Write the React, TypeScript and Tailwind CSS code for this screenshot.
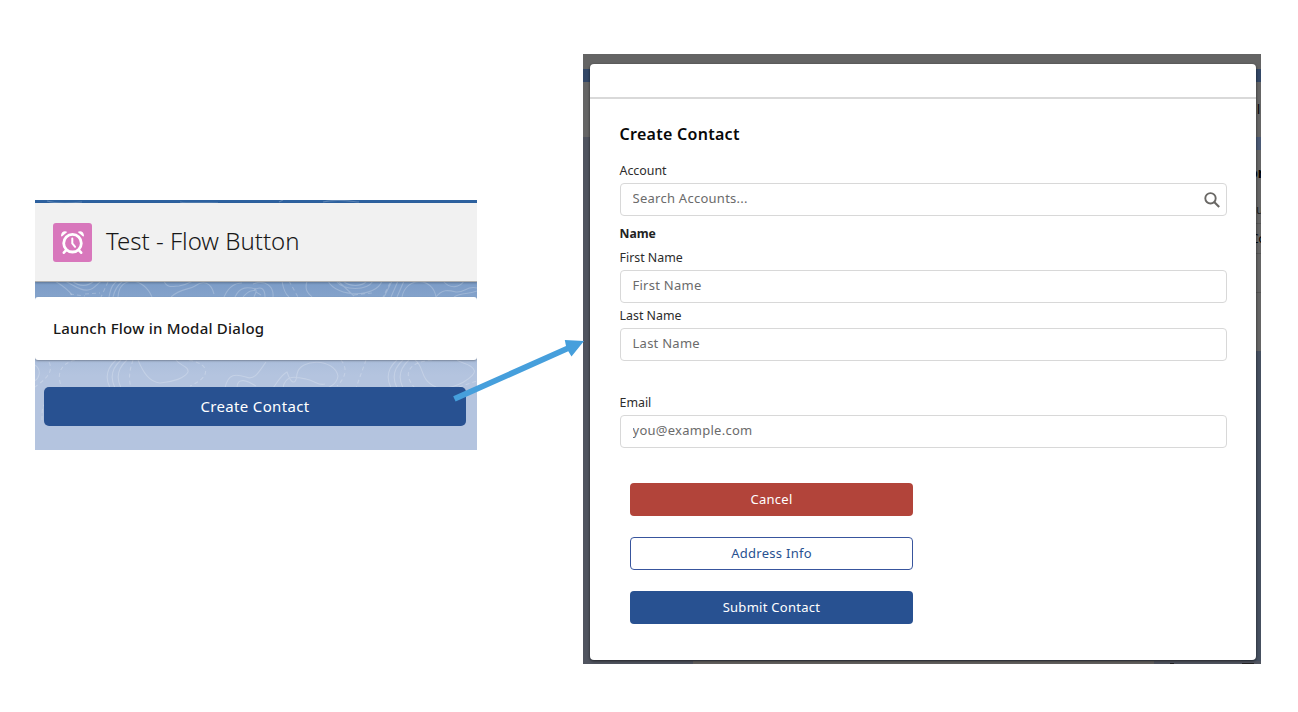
import type { ReactNode } from "react";

function Contours({ className }: { className: string }) {
  return (
    <svg className={className} viewBox="0 0 442 250" fill="none" stroke="white" strokeOpacity="0.22" strokeWidth="1.1">
      <path d="M20 81c8 5 13 8 17 14M30 81c10 5 16 10 23 9 8-1 10-9 15-9M37 81c8 6 15 6 22 0M74 97c2-10 4-14 10-17M78 97c2-9 6-13 10-16M83 97c1-22 26-20 34 0M129 81c3 8 10 5 15 5 8-1 11-4 14-5M136 97c10-9 18-7 24-11 8-6 16-4 19 8M189 97c4-9 10-14 18-14M200 97c5-11 13-10 21-8M208 97c6-7 10-7 14-6" />
      <path d="M218 84c13-5 21 3 20 13M219 90c8-5 11 0 11 7M219 97l2-5 5 3M247 81c1 6 3 13 7 16M272 81c-3 10 2 13 5 16M301 81c8 10 31 10 37 0M308 81c7 6 18 6 24 0M293 81c9 17 48 17 54 0M303 81l16 15M356 97l7-16M362 97l7-16M367 97c4-21 31-20 34 0M349 97c4-8 6-12 8-16M401 97c6-8 12-7 20-5 9 1 11-7 21-4M408 81c8 9 17 6 21 0M419 97c8-5 13-2 23-6" />
      <path strokeDasharray="4 3" d="M50 94l15-1M35 94l15 2M73 82l-7 15M254 81l9 16M319 95l18-2M355 83l-7 14" />
      <path d="M81 160c-9 8-11 18-6 28M86 160c-9 8-11 18-6 28M92 160c-9 8-11 18-6 28M103 160c5 12 11 22 22 23 13-1 25-5 28-11 1-6-8-6-12-12M190 188c3-15 11-14 21-11 9 4 14-7 20-15M202 188c0-12 11-7 19-2M238 188c6-8 8-13 14-16 4 12 9 14 10 2 3-16 37-16 41 2-1 9-8 10-10 12M248 188c2-14 14-11 23-9 10 2 12 7 19 5M362 160c-9 8-11 18-6 28M368 160c-9 8-11 18-6 28M374 160c-9 8-11 18-6 28M380 160c10 7 4 20 21 27 18 5 42-12 38-17-3-7-12-6-17-10M0 165c8 6 3 15-1 16" />
      <path strokeDasharray="4 3" d="M14 162c6 12-8 20-14 25M40 160c-19 5-17 19-13 28M98 160c-3 9-5 18-2 27M154 160c24 5 20 18 1 26M306 160c8 10 3 19-4 26M331 160l-10 28M397 160c-24 2-30 14-17 28M424 187l18-6M7 220c0-13 0-15 8-20" />
      <path d="M12 1c10 3 25 2 35 1M145 2c10 2 28 0 38 1M244 2l4-2M288 2c15-4 31 0 36 0" />
    </svg>
  );
}

function Button({ className, children }: { className: string; children: ReactNode }) {
  return (
    <button className={`flex h-[33px] w-[283px] items-center justify-center rounded-[4px] text-[13px] tracking-[0.28px] ${className}`}>
      {children}
    </button>
  );
}

function Field({ label, placeholder, className, search }: { label: string; placeholder: string; className: string; search?: boolean }) {
  return (
    <label className={`block ${className}`}>
      <span className="block h-[20px] text-[12.4px] leading-[16px] text-[#2c2c2c]">{label}</span>
      <span className="flex h-[33px] items-center rounded-[4px] border border-[#d8d8d8] pr-[6px] pl-3">
        <input
          className="min-w-0 flex-1 pb-px text-[13px] tracking-[0.26px] text-[#333] outline-none placeholder:text-[#6b6b6b] placeholder:opacity-100"
          placeholder={placeholder}
        />
        {search && (
          <svg className="mt-px h-4 w-4" viewBox="0 0 16 16" fill="none" stroke="#6a6865" strokeWidth="1.9">
            <circle cx="6.5" cy="6.3" r="5.2" />
            <path d="M10.2 10l5 5" strokeWidth="2.1" />
          </svg>
        )}
      </span>
    </label>
  );
}

function LauncherCard() {
  return (
    <section className="relative mt-[200px] ml-[35px] h-[250px] w-[442px] shrink-0 overflow-hidden bg-linear-to-b from-[#7799c5] from-30% to-[#b4c4df] to-70%">
      <div className="h-[3px] bg-[#2d619f]" />
      <Contours className="absolute inset-0 h-full w-full" />
      <header className="relative flex h-[79px] items-center border-b border-[#b0b0b0] bg-[#f1f1f1] pl-[18px] shadow-[0_1px_2px_rgba(0,0,0,0.25)]">
        <span className="flex h-[39px] w-[39px] items-center justify-center rounded-[3px] bg-[#d877bc]">
          <svg className="h-[25px] w-[25px]" viewBox="0 0 25 25" fill="none" stroke="white">
            <circle cx="12.5" cy="13.2" r="8.8" strokeWidth="2.8" />
            <path d="M12.3 8.5v4.8l2.8 3.5" strokeWidth="2" strokeLinecap="round" />
            <path d="M6 20.3l-2.2 2.4M19 20.3l2.2 2.4" strokeWidth="2.6" strokeLinecap="round" />
            <path d="M1 5.5C1.2 1.5 5 .3 7.3 2.1L2.2 6.2C1.7 6.6 1 6.4 1 5.5zM24 5.5C23.8 1.5 20 .3 17.7 2.1l5.1 4.1c.5.4 1.2.2 1.2-.7z" fill="white" stroke="none" />
          </svg>
        </span>
        <h1 className="ml-[14px] pb-[2px] text-[24px] font-light whitespace-nowrap text-[#181818]">Test - Flow Button</h1>
      </header>
      <div className="relative mt-[15px] flex h-[63px] items-center rounded-[3px] bg-white pl-[18px] text-[15px] font-medium tracking-[0.23px] text-[#181818] shadow-[0_1px_2px_rgba(0,0,0,0.3)]">
        <span className="pb-px">Launch Flow in Modal Dialog</span>
      </div>
      <button className="relative mt-[27px] ml-[9px] flex h-[39px] w-[422px] items-center justify-center rounded-[5px] bg-[#285191] pb-px text-[15px] tracking-[0.35px] text-white">
        Create Contact
      </button>
    </section>
  );
}

function Backdrop() {
  return (
    <div className="absolute inset-0 overflow-hidden bg-[#50545f]">
      <div className="h-[15px] bg-[#646464]" />
      <div className="h-[13px] bg-[#334766]" />
      <div className="h-[55px] bg-[#656565]" />
      <div className="flex h-[13px] justify-end"><div className="w-[20px] bg-[#4b5a75]" /></div>
      <div className="flex h-[201px] justify-end"><div className="w-[20px] bg-[#656565]" /></div>
      <div className="flex h-[310px] justify-end"><div className="w-[20px] bg-[#465060]" /></div>
      <div className="ml-[110px] h-[3px] w-[461px] bg-[#64615f]" />
      <div className="absolute top-[48px] right-[1px] text-[12px] leading-[16px] text-black">l</div>
      <div className="absolute top-[111px] left-[666px] text-[14px] leading-[16px] font-bold text-black">or</div>
      <div className="absolute top-[148px] left-[673px] text-[12px] leading-[16px] text-[#1f1f1f]">u</div>
      <div className="absolute top-[177px] left-[668px] text-[12px] leading-[16px] text-black">Co</div>
      <div className="absolute top-[169px] right-0 h-px w-[5px] bg-[#555]" />
      <div className="absolute top-[199px] right-0 h-px w-[5px] bg-[#555]" />
      <div className="absolute top-[238px] right-0 h-px w-[5px] bg-[#555]" />
      <div className="absolute bottom-0 left-[587px] h-px w-[4px] bg-[#222]" />
      <div className="absolute bottom-0 left-[659px] h-px w-[12px] bg-[#222]" />
    </div>
  );
}

function ContactDialog() {
  return (
    <section className="relative mt-[54px] ml-[106px] h-[610px] w-[678px] shrink-0 pt-[10px] pl-[7px]">
      <Backdrop />
      <div className="relative flow-root h-[595.5px] w-[666px] rounded-[4px] bg-white pr-[29px] pl-[29.5px] shadow-[0_1px_3px_rgba(0,0,0,0.6)]">
        <div className="-mr-[29px] -ml-[29.5px] h-[35px] border-b-2 border-[#d9d9d9]" />
        <h2 className="mt-[24px] h-[24px] text-[16px] leading-[22px] font-semibold tracking-[0.28px] text-[#080808]">Create Contact</h2>
        <Field className="mt-[16px]" label="Account" placeholder="Search Accounts..." search />
        <h3 className="mt-[10px] h-[16px] text-[12.2px] leading-[16px] font-bold text-[#222]">Name</h3>
        <Field className="mt-[8px]" label="First Name" placeholder="First Name" />
        <Field className="mt-[5px]" label="Last Name" placeholder="Last Name" />
        <Field className="mt-[34px]" label="Email" placeholder="you@example.com" />
        <div className="mt-[35px] ml-[10.5px] flex flex-col gap-[21px]">
          <Button className="bg-[#b2443a] text-white">Cancel</Button>
          <Button className="border border-[#38559d] text-[#285191]">Address Info</Button>
          <Button className="bg-[#285191] text-white">Submit Contact</Button>
        </div>
      </div>
    </section>
  );
}

export default function App() {
  return (
    <main className="relative flex h-[712px] w-[1298px] items-start overflow-hidden bg-white font-['Noto_Sans',sans-serif]">
      <LauncherCard />
      <ContactDialog />
      <svg className="absolute top-[330px] left-[445px] h-[80px] w-[145px]" viewBox="445 330 145 80">
        <path d="M455.6 401.5L453.2 396.3L566 346L564.8 340L584 341L571.5 356.5L568.3 351.3Z" fill="#469fdc" />
      </svg>
    </main>
  );
}
